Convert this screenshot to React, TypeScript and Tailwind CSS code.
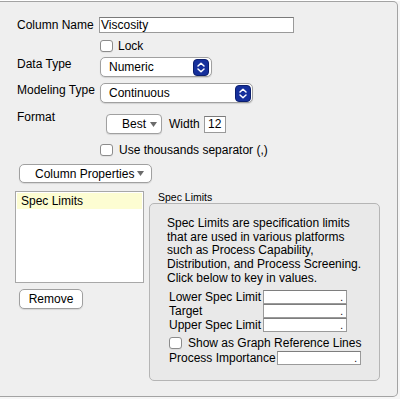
import React from 'react'

function Check() {
  return <span className="inline-block w-[13px] h-[12px] rounded-[3px] border border-[#8c8c8c] bg-white shadow-[0_1px_0_rgba(0,0,0,0.05)]" />
}

function Stepper() {
  return (
    <svg width="16" height="17" viewBox="0 0 16 17">
      <rect x="0.5" y="0.5" width="15" height="16" rx="3.5" fill="#16309c" stroke="#0c1f6e" />
      <path d="M5 7 L8 4.2 L11 7" stroke="white" strokeWidth="1.5" fill="none" strokeLinecap="round" strokeLinejoin="round" />
      <path d="M5 10 L8 12.8 L11 10" stroke="white" strokeWidth="1.5" fill="none" strokeLinecap="round" strokeLinejoin="round" />
    </svg>
  )
}

function Caret() {
  return (
    <svg width="7" height="5" viewBox="0 0 7 5">
      <path d="M0 0 L7 0 L3.5 5 Z" fill="#6b6b6b" />
    </svg>
  )
}

function NumBox({ w }: { w: string }) {
  return (
    <div className={`${w} h-[14px] border border-[#9a9a9a] border-t-[#7e7e7e] bg-white flex items-end justify-end pr-[3px] text-[10px] leading-[10px]`}>
      .
    </div>
  )
}

export default function App() {
  return (
    <div className="w-[400px] h-[399px] bg-[#f6f6f6] text-black text-[12px] leading-[14px] font-['Liberation_Sans',Arial,sans-serif]">
      <div className="mt-[1px] w-[398px] h-[396px] bg-[#efefef] border-t border-r border-b border-[#a3a3a3] rounded-r-[5px] flex flex-col">
        {/* Column Name */}
        <div className="flex items-center mt-[15px]">
          <div className="w-[99px] pl-[17px]">Column Name</div>
          <div className="w-[195px] h-[16px] border border-[#9a9a9a] border-t-[#7a7a7a] bg-white pl-[1px] flex items-center">Viscosity</div>
        </div>

        {/* Lock */}
        <div className="flex items-center mt-[6px] pl-[100px] gap-[5px]">
          <Check />
          <span>Lock</span>
        </div>

        {/* Data Type */}
        <div className="flex items-start mt-[4px]">
          <div className="w-[100px] pl-[17px]">Data Type</div>
          <div className="w-[112px] h-[20px] rounded-[5px] border border-[#a0a0a0] bg-white flex items-center justify-between pl-[8px] pr-[2px] shadow-[0_1px_1px_rgba(0,0,0,0.12)]">
            <span>Numeric</span>
            <Stepper />
          </div>
        </div>

        {/* Modeling Type */}
        <div className="flex items-start mt-[6px]">
          <div className="w-[100px] pl-[17px]">Modeling Type</div>
          <div className="w-[153px] h-[20px] rounded-[5px] border border-[#a0a0a0] bg-white flex items-center justify-between pl-[8px] pr-[1px] shadow-[0_1px_1px_rgba(0,0,0,0.12)]">
            <span>Continuous</span>
            <Stepper />
          </div>
        </div>

        {/* Format */}
        <div className="flex items-start mt-[7px]">
          <div className="w-[106px] pl-[17px]">Format</div>
          <div className="flex items-center mt-[4px]">
            <div className="w-[56px] h-[20px] rounded-[4px] border border-[#a0a0a0] bg-white flex items-center justify-end gap-[4px] pr-[4px] shadow-[0_1px_1px_rgba(0,0,0,0.1)]">
              <span>Best</span>
              <Caret />
            </div>
            <span className="ml-[7px]">Width</span>
            <div className="ml-[4px] w-[22px] h-[17px] border border-[#9a9a9a] border-t-[#7a7a7a] bg-white flex items-center justify-center">12</div>
          </div>
        </div>

        {/* Thousands */}
        <div className="flex items-center mt-[9px] pl-[100px] gap-[6px]">
          <Check />
          <span>Use thousands separator (,)</span>
        </div>

        {/* Column Properties */}
        <div className="mt-[7px] ml-[19px] w-[133px] h-[19px] rounded-[5px] border border-[#a0a0a0] bg-white flex items-center pl-[15px] pr-[7px] justify-between shadow-[0_1px_1px_rgba(0,0,0,0.1)]">
          <span>Column Properties</span>
          <Caret />
        </div>

        <div className="flex mt-[8px]">
          {/* Left list */}
          <div className="flex flex-col ml-[15px] w-[129px]">
            <div className="h-[92px] border border-[#a8a8a8] bg-white p-[1px]">
              <div className="h-[16px] bg-[#fdfdd2] pl-[4px] flex items-center">Spec Limits</div>
            </div>
            <div className="mt-[6px] ml-[4px] w-[64px] h-[20px] rounded-[5px] border border-[#a0a0a0] bg-white flex items-center justify-center shadow-[0_1px_1px_rgba(0,0,0,0.1)]">
              Remove
            </div>
          </div>

          {/* Right group */}
          <div className="flex flex-col ml-[5px]">
            <div className="pl-[9px] text-[10.5px] leading-[12px] h-[12px]">Spec Limits</div>
            <div className="w-[231px] h-[178px] border border-[#b5b5b5] rounded-[5px] bg-[#e9e9e9] pl-[17px] pt-[13px]">
              <div className="leading-[13.7px]">
                <div>Spec Limits are specification limits</div>
                <div>that are used in various platforms</div>
                <div>such as Process Capability,</div>
                <div>Distribution, and Process Screening.</div>
                <div>Click below to key in values.</div>
              </div>
              <div className="mt-[4px] pl-[2px] flex flex-col">
                <div className="flex items-center h-[14px]">
                  <div className="w-[94px]">Lower Spec Limit</div>
                  <NumBox w="w-[84px]" />
                </div>
                <div className="flex items-center h-[14px]">
                  <div className="w-[94px]">Target</div>
                  <NumBox w="w-[84px]" />
                </div>
                <div className="flex items-center h-[14px]">
                  <div className="w-[94px]">Upper Spec Limit</div>
                  <NumBox w="w-[84px]" />
                </div>
                <div className="flex items-center gap-[6px] mt-[4px]">
                  <Check />
                  <span>Show as Graph Reference Lines</span>
                </div>
                <div className="flex items-center mt-[1px]">
                  <div className="w-[108px]">Process Importance</div>
                  <NumBox w="w-[84px]" />
                </div>
              </div>
            </div>
          </div>
        </div>
      </div>
    </div>
  )
}
